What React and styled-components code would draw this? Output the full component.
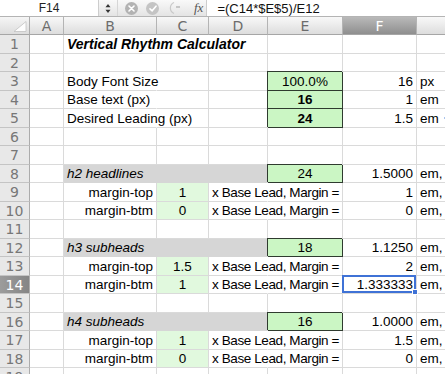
import styled, { createGlobalStyle, css } from 'styled-components';

const GlobalStyle = createGlobalStyle`
  html, body {
    margin: 0;
    padding: 0;
    background: #fff;
    overflow: hidden;
  }
  #root {
    width: 445px;
    height: 374px;
    overflow: hidden;
  }
`;

const COLUMNS = ['A', 'B', 'C', 'D', 'E', 'F', 'G'];
const ROW_COUNT = 19;
const ROW_HEIGHTS = Array.from({ length: ROW_COUNT }, (_, i) => (i % 2 === 0 ? 19 : 18));
const SELECTED = { col: 'F', row: 14 };

const FILLS = {
  green: '#cbf6c4',
  mint: '#e1f9de',
  band: '#d6d6d6',
};

const heading = (label, size, em) => ({
  B: { v: label, italic: true, fill: 'band', flow: true },
  C: { fill: 'band', flow: true },
  D: { fill: 'band', flow: true },
  E: { v: size, fill: 'green', box: true, align: 'center' },
  F: { v: em, align: 'right' },
  G: { v: 'em,' },
});

const margin = (label, lead, em) => ({
  B: { v: label, align: 'right' },
  C: { v: lead, fill: 'mint', align: 'center' },
  D: { v: 'x Base Lead, Margin =', flow: true, tight: true },
  F: { v: em, align: 'right' },
  G: { v: 'em,' },
});

const SHEET = {
  1: {
    B: { v: 'Vertical Rhythm Calculator', title: true, flow: true },
    C: { flow: true },
  },
  3: {
    B: { v: 'Body Font Size', flow: true },
    E: { v: '100.0%', fill: 'green', box: true, align: 'center' },
    F: { v: '16', align: 'right' },
    G: { v: 'px' },
  },
  4: {
    B: { v: 'Base text (px)', flow: true },
    E: { v: '16', fill: 'green', box: true, bold: true, align: 'center' },
    F: { v: '1', align: 'right' },
    G: { v: 'em' },
  },
  5: {
    B: { v: 'Desired Leading (px)', flow: true },
    E: { v: '24', fill: 'green', box: true, bold: true, align: 'center' },
    F: { v: '1.5', align: 'right' },
    G: { v: 'em', mark: true },
  },
  8: heading('h2 headlines', '24', '1.5000'),
  9: margin('margin-top', '1', '1'),
  10: margin('margin-btm', '0', '0'),
  12: heading('h3 subheads', '18', '1.1250'),
  13: margin('margin-top', '1.5', '2'),
  14: margin('margin-btm', '1', '1.333333'),
  16: heading('h4 subheads', '16', '1.0000'),
  17: margin('margin-top', '1', '1.5'),
  18: margin('margin-btm', '0', '0'),
};

const FormulaBar = styled.div`
  display: flex;
  height: 17px;
  box-sizing: border-box;
  border-bottom: 1px solid #b4b4b4;
  background: linear-gradient(#f9f9f9, #e4e4e4);
  font-family: "Liberation Sans", Arial, sans-serif;
`;

const NameBox = styled.div`
  width: 99px;
  box-sizing: border-box;
  display: flex;
  align-items: center;
  justify-content: center;
  font-size: 12px;
  color: #222;
  background: #fff;
  border-right: 1px solid #cdcdcd;
`;

const Stepper = styled.div`
  width: 19px;
  display: flex;
  align-items: center;
  justify-content: center;
  border-right: 1px solid #d6d6d6;
  box-sizing: border-box;
`;

const Tools = styled.div`
  display: flex;
  align-items: center;
  gap: 8px;
  padding: 0 3px 0 7px;
  border-right: 1px solid #cdcdcd;
`;

const RoundButton = styled.span`
  width: 13px;
  height: 13px;
  border-radius: 50%;
  background: ${(p) => (p.$muted ? '#c4c4c4' : '#b3b3b3')};
  display: flex;
  align-items: center;
  justify-content: center;
`;

const Fx = styled.span`
  font-family: "Liberation Serif", "Times New Roman", serif;
  font-style: italic;
  font-size: 13px;
  color: #555;
  margin-left: 2px;
`;

const FormulaInput = styled.div`
  flex: 1;
  display: flex;
  align-items: center;
  padding-left: 10px;
  font-size: 13px;
  color: #111;
  background: #fff;
`;

const Sheet = styled.div`
  display: grid;
  grid-template-columns: 30px 34px 93px 52px 59px 75px 74px 74px;
  grid-template-rows: 18px ${ROW_HEIGHTS.map((h) => `${h}px`).join(' ')};
  font-family: "Liberation Sans", Arial, Helvetica, sans-serif;
  font-size: 13.5px;
  color: #000;
`;

const Corner = styled.div`
  box-sizing: border-box;
  background: linear-gradient(#f6f6f6, #dcdcdc);
  border-right: 1px solid #acacac;
  border-bottom: 1px solid #a6a6a6;
  display: flex;
  align-items: flex-end;
  justify-content: flex-end;
  padding: 0 2px 2px 0;
`;

const ColHead = styled.div`
  box-sizing: border-box;
  display: flex;
  align-items: center;
  justify-content: center;
  font-family: "DejaVu Sans", Verdana, sans-serif;
  font-size: 14px;
  border-right: 1px solid #b4b4b4;
  border-bottom: 1px solid #a6a6a6;
  ${(p) =>
    p.$active
      ? css`
          background: linear-gradient(#b9b9b9, #8f8f8f);
          color: #fff;
        `
      : css`
          background: linear-gradient(#f8f8f8, #dddddd);
          color: #6c6c6c;
        `}
`;

const RowHead = styled.div`
  box-sizing: border-box;
  display: flex;
  align-items: center;
  justify-content: center;
  font-family: "DejaVu Sans", Verdana, sans-serif;
  font-size: 14px;
  border-right: 1px solid #acacac;
  border-bottom: 1px solid #c4c4c4;
  ${(p) =>
    p.$active
      ? css`
          background: linear-gradient(90deg, #9c9c9c, #858585);
          color: #fff;
        `
      : css`
          background: #e8e8e8;
          color: #777;
        `}
`;

const Cell = styled.div`
  position: relative;
  box-sizing: border-box;
  min-width: 0;
  display: flex;
  align-items: center;
  padding: 0 3px;
  white-space: nowrap;
  justify-content: ${(p) =>
    p.$align === 'right' ? 'flex-end' : p.$align === 'center' ? 'center' : 'flex-start'};
  background: ${(p) => FILLS[p.$fill] || 'transparent'};
  border-right: 1px solid ${(p) => (p.$flow ? 'transparent' : '#dadada')};
  border-bottom: 1px solid ${(p) => (p.$fill === 'band' ? FILLS.band : '#dadada')};
  font-weight: ${(p) => (p.$bold || p.$title ? 700 : 400)};
  font-style: ${(p) => (p.$italic || p.$title ? 'italic' : 'normal')};
  font-size: ${(p) => (p.$title ? '14px' : 'inherit')};
  letter-spacing: ${(p) => (p.$tight ? '-0.4px' : 'normal')};
  ${(p) =>
    p.$box &&
    css`
      border-right-color: #2f3b2f;
      border-bottom-color: #2f3b2f;
      box-shadow: -1px -1px 0 0 #2f3b2f;
    `}
`;

const Selection = styled.span`
  position: absolute;
  top: -1px;
  left: -1px;
  right: 0;
  bottom: 0;
  border: 2px solid #3f72d6;
  z-index: 2;
  pointer-events: none;
`;

const Handle = styled.span`
  position: absolute;
  right: -4px;
  bottom: -4px;
  width: 4px;
  height: 4px;
  background: #3f72d6;
  border: 1px solid #fff;
`;

const NoteMark = styled.span`
  display: inline-block;
  width: 5px;
  height: 2px;
  margin-left: 5px;
  background: #8db0e6;
  border-radius: 1px;
`;

const CloseIcon = () => (
  <svg width="7" height="7" viewBox="0 0 7 7">
    <path d="M1 1L6 6M6 1L1 6" stroke="#fff" strokeWidth="1.6" strokeLinecap="round" />
  </svg>
);

const CheckIcon = () => (
  <svg width="8" height="7" viewBox="0 0 8 7">
    <path d="M1 3.8L3.1 5.8L7 1.2" stroke="#fff" strokeWidth="1.6" fill="none" strokeLinecap="round" />
  </svg>
);

const StepperIcon = () => (
  <svg width="6" height="11" viewBox="0 0 6 11">
    <path d="M0.5 4.2L3 1L5.5 4.2Z" fill="#333" />
    <path d="M0.5 6.8L3 10L5.5 6.8Z" fill="#333" />
  </svg>
);

const EqualsIcon = () => (
  <svg width="17" height="14" viewBox="0 0 17 14">
    <path d="M7 1.5A6 6 0 0 0 7 12.5" stroke="#c9c9c9" strokeWidth="1.2" fill="none" />
    <path d="M9 6h4" stroke="#aaa" strokeWidth="1.2" />
  </svg>
);

const SelectAllIcon = () => (
  <svg width="14" height="11" viewBox="0 0 14 11">
    <path d="M13 0.5V10.5H1Z" fill="#fdfdfd" stroke="#c2c2c2" strokeWidth="0.8" />
  </svg>
);

const Row = ({ row }) => {
  const data = SHEET[row] || {};
  return (
    <>
      <RowHead $active={row === SELECTED.row}>{row}</RowHead>
      {COLUMNS.map((c) => {
        const cell = data[c] || {};
        const selected = row === SELECTED.row && c === SELECTED.col;
        return (
          <Cell
            key={c}
            $align={cell.align}
            $fill={cell.fill}
            $flow={cell.flow}
            $bold={cell.bold}
            $italic={cell.italic}
            $title={cell.title}
            $box={cell.box}
            $tight={cell.tight}
          >
            {cell.v}
            {cell.mark && <NoteMark />}
            {selected && (
              <Selection>
                <Handle />
              </Selection>
            )}
          </Cell>
        );
      })}
    </>
  );
};

const App = () => {
  const rows = Array.from({ length: ROW_COUNT }, (_, i) => i + 1);

  return (
    <>
      <GlobalStyle />
      <FormulaBar>
        <NameBox>F14</NameBox>
        <Stepper>
          <StepperIcon />
        </Stepper>
        <Tools>
          <RoundButton>
            <CloseIcon />
          </RoundButton>
          <RoundButton $muted>
            <CheckIcon />
          </RoundButton>
          <EqualsIcon />
          <Fx>fx</Fx>
        </Tools>
        <FormulaInput>=(C14*$E$5)/E12</FormulaInput>
      </FormulaBar>
      <Sheet>
        <Corner>
          <SelectAllIcon />
        </Corner>
        {COLUMNS.map((c) => (
          <ColHead key={c} $active={c === SELECTED.col}>
            {c}
          </ColHead>
        ))}
        {rows.map((r) => (
          <Row key={r} row={r} />
        ))}
      </Sheet>
    </>
  );
};

export default App;
